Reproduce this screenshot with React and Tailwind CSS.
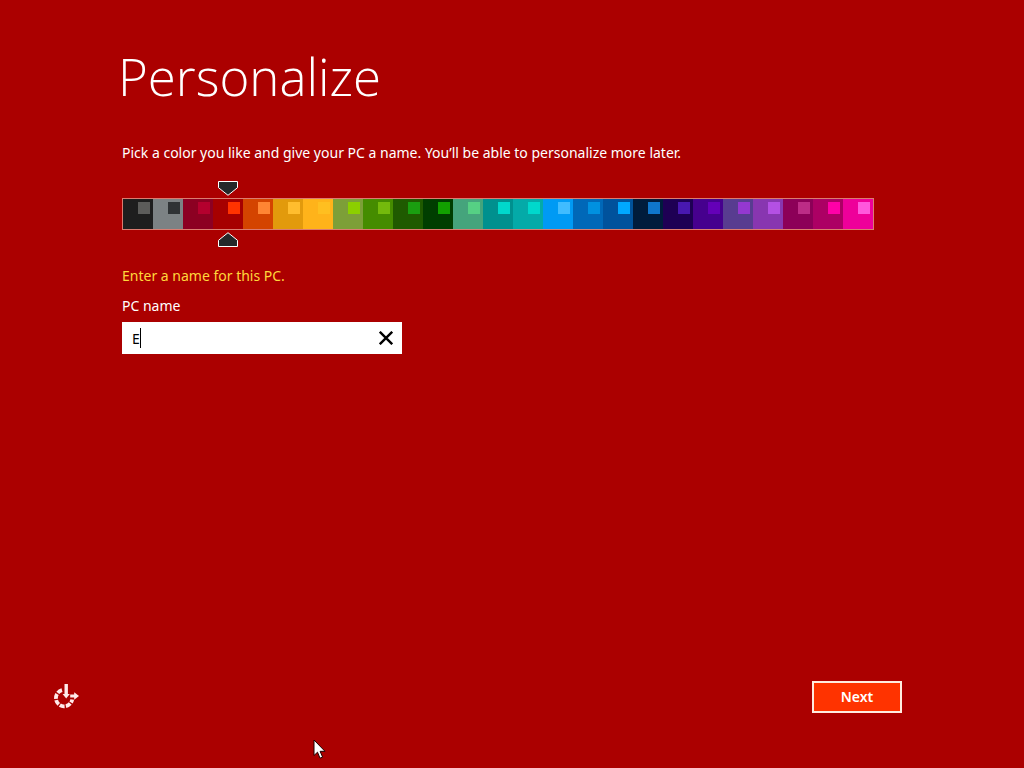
import React, { useState } from 'react'

const COLORS = [
  { name: 'Black', bg: 'bg-[#1e1e1e]', accent: 'bg-[#5c5c5a]' },
  { name: 'Gray', bg: 'bg-[#7c8284]', accent: 'bg-[#2f3335]' },
  { name: 'Crimson', bg: 'bg-[#8c0022]', accent: 'bg-[#b4002e]' },
  { name: 'Red', bg: 'bg-[#a60000]', accent: 'bg-[#ff3300]' },
  { name: 'Burnt orange', bg: 'bg-[#d44400]', accent: 'bg-[#ff8533]' },
  { name: 'Amber', bg: 'bg-[#e29a0c]', accent: 'bg-[#ffbd2e]' },
  { name: 'Yellow', bg: 'bg-[#ffb31a]', accent: 'bg-[#ffbf20]' },
  { name: 'Olive', bg: 'bg-[#7d9f38]', accent: 'bg-[#8ccf00]' },
  { name: 'Green', bg: 'bg-[#458c00]', accent: 'bg-[#74ba0c]' },
  { name: 'Forest', bg: 'bg-[#1f5a00]', accent: 'bg-[#1a9e10]' },
  { name: 'Dark green', bg: 'bg-[#003e00]', accent: 'bg-[#12a000]' },
  { name: 'Mint', bg: 'bg-[#45a47c]', accent: 'bg-[#56d084]' },
  { name: 'Teal', bg: 'bg-[#00908e]', accent: 'bg-[#00d8cc]' },
  { name: 'Turquoise', bg: 'bg-[#04aaa8]', accent: 'bg-[#00d8cc]' },
  { name: 'Sky', bg: 'bg-[#009af4]', accent: 'bg-[#40bcff]' },
  { name: 'Blue', bg: 'bg-[#0068b8]', accent: 'bg-[#0091e0]' },
  { name: 'Cobalt', bg: 'bg-[#00529c]', accent: 'bg-[#00a8ff]' },
  { name: 'Navy', bg: 'bg-[#001c3c]', accent: 'bg-[#0f76ca]' },
  { name: 'Midnight', bg: 'bg-[#1e0054]', accent: 'bg-[#4818b0]' },
  { name: 'Indigo', bg: 'bg-[#46008e]', accent: 'bg-[#6400b8]' },
  { name: 'Slate purple', bg: 'bg-[#583c90]', accent: 'bg-[#9438d0]' },
  { name: 'Purple', bg: 'bg-[#8836b0]', accent: 'bg-[#b450e4]' },
  { name: 'Plum', bg: 'bg-[#8c0058]', accent: 'bg-[#bc2c86]' },
  { name: 'Magenta', bg: 'bg-[#ac0064]', accent: 'bg-[#ff00a8]' },
  { name: 'Pink', bg: 'bg-[#ee009a]', accent: 'bg-[#ff58dc]' },
]

function Marker({ className }) {
  return (
    <svg className={className} width="20" height="15" viewBox="0 0 20 15" aria-hidden="true">
      <path d="M.5.5h19v6.2L10 14.3.5 6.7z" fill="#25282a" stroke="#fff" />
    </svg>
  )
}

function ColorPicker({ selected, onSelect }) {
  return (
    <fieldset aria-label="Color" className="mt-[35px] flex w-fit border border-[#dc7c70]">
      {COLORS.map((c, i) => (
        <label key={c.name} className={`relative flex h-[30px] w-[30px] justify-end pr-[3px] pt-[3px] ${c.bg}`}>
          <input
            type="radio"
            name="color"
            aria-label={c.name}
            checked={selected === i}
            onChange={() => onSelect(i)}
            className="absolute inset-0 h-full w-full appearance-none"
          />
          <span className={`h-3 w-3 ${c.accent}`} />
          {selected === i && (
            <>
              <Marker className="absolute -top-[18px] left-[5px]" />
              <Marker className="absolute -bottom-[18px] left-[5px] rotate-180" />
            </>
          )}
        </label>
      ))}
    </fieldset>
  )
}

function EaseOfAccessIcon() {
  return (
    <svg width="26" height="26" viewBox="0 0 26 26" fill="none" stroke="#ffeaea" aria-hidden="true">
      <path d="M9 6.2A8.2 8.2 0 1 0 19.2 15.5" strokeWidth="3.8" strokeDasharray="5 1.3" />
      <path d="M13.2 0v11" strokeWidth="3.4" />
      <path d="M9.6 10h7.2l-3.6 4.4z" fill="#ffeaea" stroke="none" />
      <path d="M17.2 12h5" strokeWidth="3" />
      <path d="M21.2 8.2l4.8 3.8-4.8 3.8z" fill="#ffeaea" stroke="none" />
    </svg>
  )
}

function Pointer() {
  return (
    <svg className="pointer-events-none absolute left-[313px] top-[739px]" width="13" height="21" viewBox="0 0 13 21" aria-hidden="true">
      <path d="M1 1v15.5l3.5-3.3 2.5 6 2.6-1.1-2.5-5.8H12z" fill="#fff" stroke="#1c0000" />
    </svg>
  )
}

export default function App() {
  const [color, setColor] = useState(3)
  const [name, setName] = useState('E')

  return (
    <div className="relative flex min-h-screen flex-col bg-[#ab0000] font-['Noto_Sans','Open_Sans',sans-serif] text-sm text-white">
      <main className="flex-1 pl-[122px] pr-8 pt-[38px]">
        <h1 className="-ml-1 font-['Open_Sans',sans-serif] text-[51px] font-light leading-[76px]">Personalize</h1>
        <p className="mt-[29px] leading-5">
          Pick a color you like and give your PC a name. You’ll be able to personalize more later.
        </p>

        <ColorPicker selected={color} onSelect={setColor} />

        <p className="mt-9 leading-5 text-[#ffd83c]">Enter a name for this PC.</p>
        <label htmlFor="pc-name" className="mt-[10px] block w-fit leading-5">PC name</label>
        <div className="relative mt-[6px] flex h-8 w-[280px] items-center bg-white text-black">
          <input
            id="pc-name"
            type="text"
            value={name}
            onChange={e => setName(e.target.value)}
            className="h-full min-w-0 flex-1 pl-[10px] caret-transparent outline-none"
          />
          {name === 'E' && <span className="absolute left-[18px] top-[6px] h-5 w-px bg-black" />}
          <button type="button" aria-label="Clear" onClick={() => setName('')} className="flex h-8 w-8 items-center justify-center">
            <svg width="14" height="14" viewBox="0 0 14 14" stroke="#000" strokeWidth="2.4" aria-hidden="true">
              <path d="M.8.8l12.4 12.4M13.2.8L.8 13.2" />
            </svg>
          </button>
        </div>
      </main>

      <footer className="flex items-center justify-between pb-[55px] pl-[53px] pr-[122px]">
        <button type="button" aria-label="Ease of access">
          <EaseOfAccessIcon />
        </button>
        <button type="button" className="h-8 w-[90px] border-2 border-[#ffece0] bg-[#ff3300] font-semibold">
          Next
        </button>
      </footer>

      <Pointer />
    </div>
  )
}
